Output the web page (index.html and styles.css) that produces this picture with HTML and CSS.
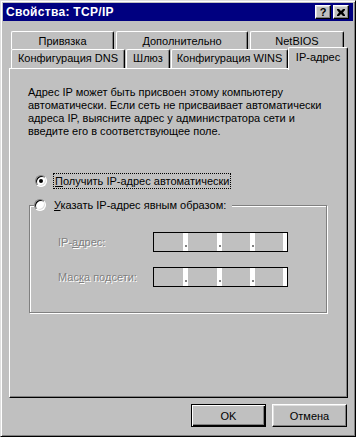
FILE: index.html
```html
<!DOCTYPE html>
<html lang="ru">

<head>
    <meta charset="UTF-8">
    <title>Свойства: TCP/IP</title>
    <link rel="stylesheet" href="styles.css">
</head>

<body>
    <div class="window">
        <div class="titlebar">
            <span class="title">Свойства: TCP/IP</span>
            <div class="caption-btns">
                <div class="cap-btn help">?</div>
                <div class="cap-btn close">
                    <svg width="8" height="7" viewBox="0 0 8 7">
                        <path d="M0 0h2l2 2 2-2h2v1L6 3.5 8 6v1H6L4 5 2 7H0V6l2-2.5L0 1z" fill="#000" />
                    </svg>
                </div>
            </div>
        </div>

        <div class="body">
            <div class="tabs">
                <div class="tab-row back">
                    <div class="tab w-bind">Привязка</div>
                    <div class="tab w-extra">Дополнительно</div>
                    <div class="tab w-netbios">NetBIOS</div>
                </div>
                <div class="tab-row front">
                    <div class="tab w-dns">Конфигурация DNS</div>
                    <div class="tab w-gate">Шлюз</div>
                    <div class="tab w-wins">Конфигурация WINS</div>
                    <div class="tab active">IP-адрес</div>
                </div>
            </div>

            <div class="panel">
                <p class="desc">Адрес IP может быть присвоен этому компьютеру<br>
                    автоматически. Если сеть не присваивает автоматически<br>
                    адреса IP, выясните адрес у администратора сети и<br>
                    введите его в соответствующее поле.</p>

                <div class="option first">
                    <span class="radio checked"></span>
                    <span class="label focus"><u>П</u>олучить IP-адрес автоматически</span>
                </div>

                <fieldset class="group">
                    <legend class="option">
                        <span class="radio"></span>
                        <span class="label"><u>У</u>казать IP-адрес явным образом:</span>
                    </legend>
                    <div class="fields">
                        <span class="field-label">IP-<u>а</u>дрес:</span>
                        <div class="ipbox">
                            <span class="seg"></span><span class="sep"></span>
                            <span class="seg"></span><span class="sep"></span>
                            <span class="seg narrow"></span><span class="sep"></span>
                            <span class="seg narrow"></span><span class="tail"></span>
                        </div>
                        <span class="field-label">Мас<u>к</u>а подсети:</span>
                        <div class="ipbox">
                            <span class="seg"></span><span class="sep"></span>
                            <span class="seg"></span><span class="sep"></span>
                            <span class="seg narrow"></span><span class="sep"></span>
                            <span class="seg narrow"></span><span class="tail"></span>
                        </div>
                    </div>
                </fieldset>
            </div>

            <div class="buttons">
                <button class="btn default">OK</button>
                <button class="btn">Отмена</button>
            </div>
        </div>
    </div>
</body>

</html>
```

FILE: styles.css
```css
body {
    margin: 0;
    padding: 0;
    font-family: "Liberation Sans", Arial, sans-serif;
    font-size: 11px;
    color: #000;
    background-color: #c0c0c0;
}

.window {
    width: 356px;
    height: 437px;
    box-sizing: border-box;
    border: 1px solid;
    border-color: #dfdfdf #000 #000 #dfdfdf;
    box-shadow: inset 1px 1px 0 #fff, inset -1px -1px 0 #808080;
    padding: 2px;
    background-color: #c0c0c0;
}

/* заголовок окна */
.titlebar {
    height: 18px;
    background-color: #000080;
    color: #fff;
    display: flex;
    align-items: center;
    justify-content: space-between;
    padding: 0 4px 0 3px;
}

.title {
    font-weight: bold;
    font-size: 12px;
    letter-spacing: 0.3px;
}

.caption-btns {
    display: flex;
    gap: 2px;
}

.cap-btn {
    width: 16px;
    height: 14px;
    box-sizing: border-box;
    background-color: #c0c0c0;
    border: 1px solid;
    border-color: #fff #000 #000 #fff;
    box-shadow: inset -1px -1px 0 #808080, inset 1px 1px 0 #dfdfdf;
    display: flex;
    justify-content: center;
    align-items: center;
    color: #000;
}

.help {
    font-weight: bold;
    font-size: 11px;
    line-height: 12px;
}

.body {
    padding: 10px 5px 0 6px;
}

/* вкладки */
.tab-row {
    display: flex;
    padding-left: 2px;
}

.tab {
    box-sizing: border-box;
    background-color: #c0c0c0;
    border-top: 1px solid #fff;
    border-left: 1px solid #fff;
    border-right: 1px solid #000;
    box-shadow: inset -1px 0 0 #808080;
    border-radius: 2px 2px 0 0;
    text-align: center;
    white-space: nowrap;
}

.back .tab {
    height: 18px;
    line-height: 18px;
    margin-right: 2px;
}

.front .tab {
    height: 19px;
    line-height: 17px;
}

.w-bind { width: 103px; }
.w-extra { width: 132px; }
.w-netbios { width: 94px; }
.w-dns { width: 114px; margin-right: 1px; }
.w-gate { width: 44px; margin-right: 1px; }
.w-wins { width: 117px; }

.front .tab.active {
    width: 60px;
    height: 23px;
    margin-top: -2px;
    margin-bottom: -4px;
    line-height: 19px;
    position: relative;
    z-index: 1;
}

.panel {
    height: 330px;
    box-sizing: border-box;
    border: 1px solid;
    border-color: #fff #000 #000 #fff;
    box-shadow: inset -1px -1px 0 #808080;
    padding-top: 17px;
}

.desc {
    margin: 0 0 35px 18px;
    line-height: 13px;
}

/* переключатели */
.option {
    display: flex;
    align-items: center;
    gap: 6px;
    height: 16px;
}

.option.first {
    margin-left: 25px;
}

.radio {
    width: 12px;
    height: 12px;
    box-sizing: border-box;
    border-radius: 50%;
    background-color: #fff;
    border: 1px solid;
    border-color: #808080 #fff #fff #808080;
    box-shadow: inset 1px 1px 0 #000, inset -1px -1px 0 #dfdfdf;
    display: flex;
    justify-content: center;
    align-items: center;
}

.radio.checked::after {
    content: "";
    width: 4px;
    height: 4px;
    border-radius: 50%;
    background-color: #000;
}

.label {
    border: 1px solid transparent;
    padding: 0 1px;
    line-height: 14px;
    white-space: nowrap;
}

.label.focus {
    border: 1px dotted #000;
}

.group {
    margin: 8px 0 0 19px;
    width: 298px;
    box-sizing: border-box;
    padding: 0;
    border: 1px solid #808080;
    box-shadow: inset 1px 1px 0 #fff, 1px 1px 0 #fff;
}

.group legend {
    margin-left: 4px;
    padding: 0 4px 0 0;
    background-color: #c0c0c0;
}

.fields {
    display: grid;
    grid-template-columns: 95px 135px;
    row-gap: 15px;
    align-items: center;
    padding: 19px 0 25px 28px;
}

.field-label {
    color: #808080;
    text-shadow: 1px 1px 0 #fff;
}

/* поле IP-адреса */
.ipbox {
    display: flex;
    width: 135px;
    height: 20px;
    box-sizing: border-box;
    border: 1px solid #000;
    background-color: #c0c0c0;
}

.seg {
    width: 29px;
}

.seg.narrow {
    width: 28px;
}

.sep {
    width: 5px;
    background-color: #fff;
    display: flex;
    justify-content: center;
    align-items: flex-end;
    padding-bottom: 4px;
    box-sizing: border-box;
}

.sep::after {
    content: "";
    width: 2px;
    height: 2px;
    background-color: #808080;
}

.tail {
    width: 4px;
    background-color: #fff;
}

/* кнопки */
.buttons {
    display: flex;
    justify-content: flex-end;
    gap: 6px;
    margin: 6px 1px 0 0;
}

.btn {
    width: 75px;
    height: 23px;
    box-sizing: border-box;
    font-family: "Liberation Sans", Arial, sans-serif;
    font-size: 11px;
    color: #000;
    background-color: #c0c0c0;
    border: 1px solid;
    border-color: #fff #000 #000 #fff;
    box-shadow: inset -1px -1px 0 #808080, inset 1px 1px 0 #dfdfdf;
    padding: 0;
}

.btn.default {
    border-color: #000;
    box-shadow: inset 1px 1px 0 #fff, inset -1px -1px 0 #000, inset -2px -2px 0 #808080;
}
```
